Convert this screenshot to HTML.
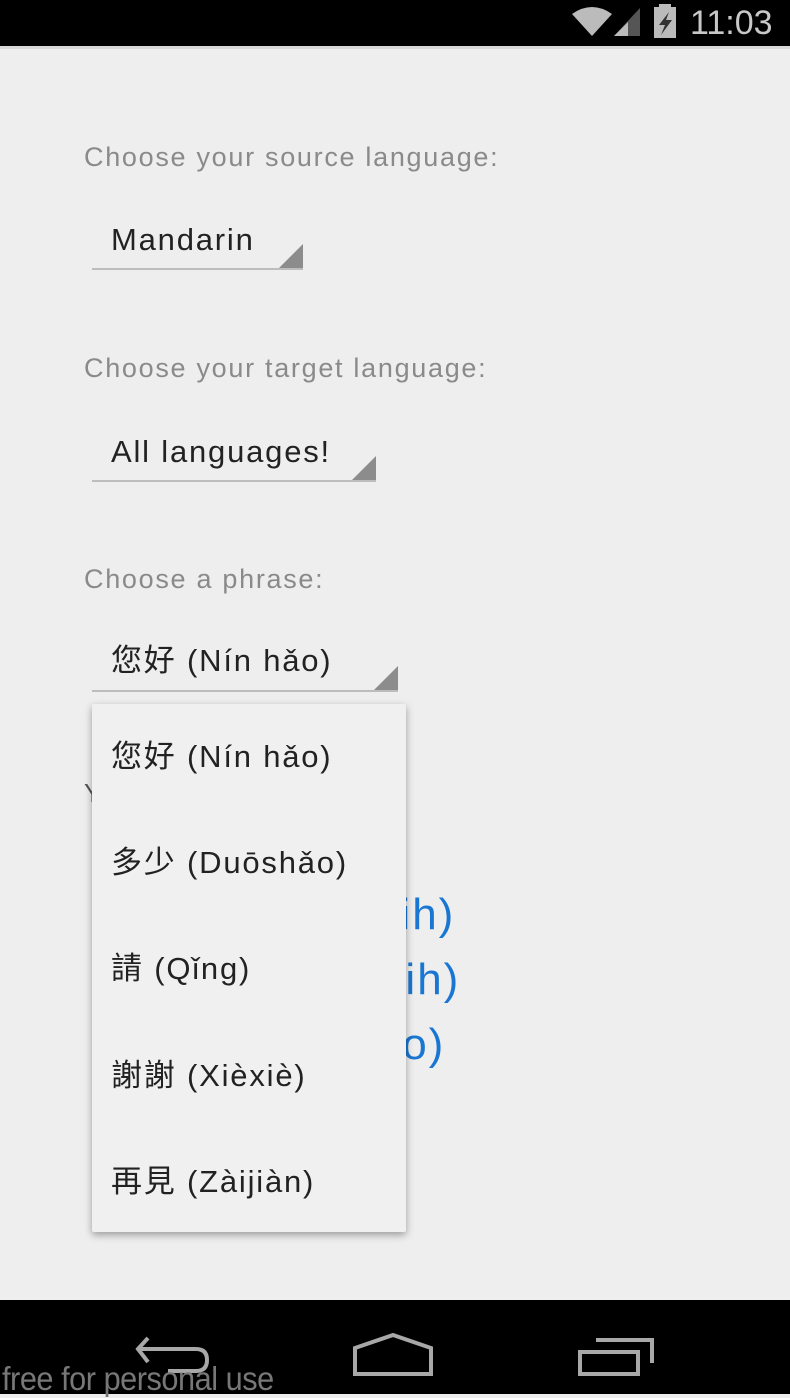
<!DOCTYPE html>
<html><head><meta charset="utf-8"><style>
body{margin:0;width:790px;height:1394px;background:#eeeeee;position:relative;overflow:hidden;font-family:"Liberation Sans","Noto Sans CJK SC",sans-serif}
.abs{position:absolute;white-space:nowrap}
.lab{font-size:27px;color:#8a8a8a;left:84px;letter-spacing:1.7px}
.sp{left:92px;height:0;border-bottom:2px solid #bdbdbd}
.sp span{position:absolute;left:19px;bottom:10px;font-size:31px;color:#222;letter-spacing:1.8px}
.tri{position:absolute;right:0;bottom:0;width:0;height:0;border-left:24px solid transparent;border-bottom:24px solid #8c8c8c}
.blue{color:#1976d2;font-size:44px;letter-spacing:2px}
.item{position:absolute;left:19px;font-size:31px;color:#222;letter-spacing:1.8px}
</style></head><body>
<div class="abs" style="left:0;top:0;width:790px;height:46px;background:#000"></div>
<div class="abs" style="left:0;top:46px;width:790px;height:3px;background:#d8d8d8"></div>
<svg class="abs" style="left:570px;top:4px" width="220" height="38">
<path d="M2 10 Q22 -4 42 10 L22 32 Z" fill="#bbb"/>
<path d="M44 32 L70 32 L70 4 Z" fill="#555"/><path d="M44 32 L58 32 L58 18 Z" fill="#bbb"/>
<rect x="84" y="3" width="22" height="31" fill="#bbb"/><rect x="89" y="0" width="12" height="4" fill="#bbb"/>
<path d="M99 8 L89 21 L95 21 L91 31 L102 16 L96 16 Z" fill="#333"/>
<text x="120" y="30" font-size="34" fill="#c8c8c8" font-family="Liberation Sans">11:03</text>
</svg>
<div class="abs lab" style="top:142px">Choose your source language:</div>
<div class="abs sp" style="top:268px;width:211px"><span>Mandarin</span><div class="tri"></div></div>
<div class="abs lab" style="top:353px">Choose your target language:</div>
<div class="abs sp" style="top:480px;width:284px"><span>All languages!</span><div class="tri"></div></div>
<div class="abs lab" style="top:564px">Choose a phrase:</div>
<div class="abs sp" style="top:690px;width:306px"><span>您好 (Nín hǎo)</span><div class="tri"></div></div>
<div class="abs" style="left:84px;top:778px;font-size:26px;color:#555">Y</div>
<div class="abs blue" style="left:350px;top:890px">(Nih)</div>
<div class="abs blue" style="left:355px;top:955px">(Nih)</div>
<div class="abs blue" style="left:340px;top:1020px">(Nio)</div>
<div class="abs" style="left:92px;top:704px;width:314px;height:528px;background:#f0f0f0;box-shadow:0 3px 8px rgba(0,0,0,.35);border-radius:2px">
<div class="item" style="top:27px">您好 (Nín hǎo)</div>
<div class="item" style="top:133px">多少 (Duōshǎo)</div>
<div class="item" style="top:239px">請 (Qǐng)</div>
<div class="item" style="top:346px">謝謝 (Xièxiè)</div>
<div class="item" style="top:452px">再見 (Zàijiàn)</div>
</div>
<div class="abs" style="left:0;top:1300px;width:790px;height:94px;background:#000"></div>
<svg class="abs" style="left:0;top:1300px" width="790" height="94" fill="none" stroke="#a8a8a8" stroke-width="4">
<path d="M148 38 L138 49 L148 62 M138 49 L196 49 Q207 49 207 60 Q207 71 196 71 L168 71"/>
<path d="M355 74 L355 48 L393 35 L431 48 L431 74 Z"/>
<rect x="580" y="52" width="58" height="22"/><path d="M596 40 L652 40 L652 63"/>
</svg>
<div class="abs" style="left:2px;top:1360px;font-size:33px;color:#777;transform:scaleX(0.93);transform-origin:0 0;letter-spacing:-0.5px">free for personal use</div>
</body></html>
